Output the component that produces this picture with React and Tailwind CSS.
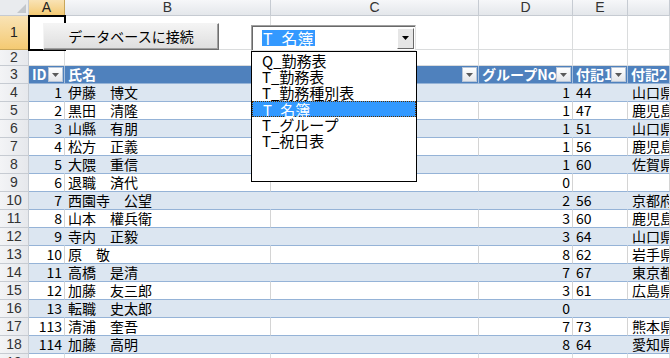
import React from 'react';

const jp = "font-['Noto_Sans_CJK_JP','Noto_Sans',sans-serif]";
const ui = "font-['Liberation_Sans','Noto_Sans_CJK_JP',sans-serif]";

const colW = ['w-[36px]', 'w-[206px]', 'w-[208px]', 'w-[94px]', 'w-[55px]', 'flex-1'];

const people = [
  ['1', '伊藤　博文', '1', '44', '山口県'],
  ['2', '黒田　清隆', '1', '47', '鹿児島県'],
  ['3', '山縣　有朋', '1', '51', '山口県'],
  ['4', '松方　正義', '1', '56', '鹿児島県'],
  ['5', '大隈　重信', '1', '60', '佐賀県'],
  ['6', '退職　済代', '0', '', ''],
  ['7', '西園寺　公望', '2', '56', '京都府'],
  ['8', '山本　權兵衛', '3', '60', '鹿児島県'],
  ['9', '寺内　正毅', '3', '64', '山口県'],
  ['10', '原　敬', '8', '62', '岩手県'],
  ['11', '高橋　是清', '7', '67', '東京都'],
  ['12', '加藤　友三郎', '3', '61', '広島県'],
  ['13', '転職　史太郎', '0', '', ''],
  ['113', '清浦　奎吾', '7', '73', '熊本県'],
  ['114', '加藤　高明', '8', '64', '愛知県'],
];

const tables = ['Q_勤務表', 'T_勤務表', 'T_勤務種別表', 'T_名簿', 'T_グループ', 'T_祝日表'];

function RowHead({ n, active, h }) {
  return (
    <div
      className={`w-[29px] shrink-0 ${h} border-r border-b text-center text-[14px] ${ui} ${
        active
          ? 'bg-gradient-to-b from-[#F9E3B5] to-[#F4CA72] border-[#C8A65A] text-[#222]'
          : 'bg-gradient-to-r from-[#F3F4F6] to-[#E6E8EC] border-[#C6CBD2] text-[#333]'
      } flex items-center justify-center`}
    >
      {n}
    </div>
  );
}

function FilterBtn() {
  return (
    <div className="w-[15px] h-[15px] shrink-0 mr-[1px] border border-[#B8C6D8] bg-gradient-to-b from-white to-[#E4E6EA] flex items-center justify-center">
      <svg width="7" height="4" viewBox="0 0 7 4">
        <path d="M0 0h7L3.5 4z" fill="#5A5A5A" />
      </svg>
    </div>
  );
}

function PlainRow({ n, active, h = 'h-[16px]' }) {
  return (
    <div className="flex">
      <RowHead n={n} active={active} h={h} />
      {colW.map((w, i) => (
        <div key={i} className={`${w} shrink-0 ${h} border-r border-b border-[#DADCDD]`} />
      ))}
    </div>
  );
}

function DataRow({ n, p, blue }) {
  const bg = blue ? 'bg-[#DCE6F1] border-r-[#DCE6F1]' : 'bg-white border-r-[#D4D4D4]';
  const cell = `shrink-0 h-[18px] border-r border-b border-b-[#95B3D7] ${bg} leading-[17px] text-[14px] text-black whitespace-nowrap overflow-hidden`;
  return (
    <div className={`flex ${jp}`}>
      <RowHead n={n} h="h-[18px]" />
      <div className={`${colW[0]} ${cell} text-right pr-[2px]`}>{p[0]}</div>
      <div className={`${colW[1]} ${cell} pl-[3px]`}>{p[1]}</div>
      <div className={`${colW[2]} ${cell}`} />
      <div className={`${colW[3]} ${cell} text-right pr-[2px]`}>{p[2]}</div>
      <div className={`${colW[4]} ${cell} pl-[3px]`}>{p[3]}</div>
      <div className={`${colW[5]} ${cell} pl-[4px]`}>{p[4]}</div>
    </div>
  );
}

function HeadCell({ w, label, last }) {
  return (
    <div className={`${w} shrink-0 h-[18px] border-r border-b border-r-[#FFFFFF80] border-b-[#95B3D7] bg-[#4F81BD] flex items-center overflow-hidden`}>
      <span className="flex-1 pl-[3px] text-white font-bold text-[14px] leading-[17px] whitespace-nowrap overflow-hidden">
        {label}
      </span>
      {!last && <FilterBtn />}
    </div>
  );
}

export default function App() {
  return (
    <div className={`relative w-[670px] h-[358px] overflow-hidden bg-white ${jp}`}>
      {/* column letters */}
      <div className={`flex h-[16px] ${ui}`}>
        <div className="w-[29px] shrink-0 h-[16px] border-r border-b border-[#C6CBD2] bg-[#E9EBEE] flex items-end justify-end p-[2px]">
          <svg width="9" height="9" viewBox="0 0 9 9">
            <path d="M9 0v9H0z" fill="#C3C7CC" />
          </svg>
        </div>
        {['A', 'B', 'C', 'D', 'E', ''].map((c, i) => (
          <div
            key={i}
            className={`${colW[i]} shrink-0 h-[16px] border-r border-b text-center text-[14px] leading-[15px] ${
              i === 0
                ? 'bg-gradient-to-b from-[#F9E3B5] to-[#F4CA72] border-[#C8A65A] text-[#222]'
                : 'bg-gradient-to-b from-[#F6F7F9] to-[#E4E7EB] border-[#C6CBD2] text-[#333]'
            }`}
          >
            {c}
          </div>
        ))}
      </div>

      <PlainRow n="1" active h="h-[34px]" />
      <PlainRow n="2" />

      {/* table header */}
      <div className={`flex ${jp}`}>
        <RowHead n="3" h="h-[18px]" />
        <HeadCell w={colW[0]} label="ID" />
        <HeadCell w={colW[1]} label="氏名" />
        <HeadCell w={colW[2]} label="" />
        <HeadCell w={colW[3]} label="グループNo" />
        <HeadCell w={colW[4]} label="付記1" />
        <HeadCell w={colW[5]} label="付記2" last />
      </div>

      {people.map((p, i) => (
        <DataRow key={i} n={String(i + 4)} p={p} blue={i % 2 === 0} />
      ))}
      <PlainRow n="19" h="h-[18px]" />

      {/* selected cell A1 */}
      <div className="absolute left-[28px] top-[15px] w-[38px] h-[36px] border-2 border-black" />

      {/* connect button */}
      <div className="absolute left-[43px] top-[23px] w-[176px] h-[27px] border border-t-[#F4F4F4] border-l-[#F4F4F4] border-r-[#6E6E6E] border-b-[#6E6E6E] bg-gradient-to-b from-[#F4F4F4] to-[#DEDEDE] shadow-[inset_-1px_-1px_0_#A0A0A0] flex items-center justify-center text-[14px] text-black">
        データベースに接続
      </div>

      {/* combo box */}
      <div className="absolute left-[251px] top-[25px] w-[165px] h-[26px] bg-white border border-t-[#A0A0A0] border-l-[#A0A0A0] border-r-[#E3E3E3] border-b-[#E3E3E3] shadow-[inset_1px_1px_0_#696969] flex items-center">
        <span className="ml-[10px] h-[16px] leading-[16px] px-[1px] bg-[#3399FF] text-white text-[16px]">T_名簿</span>
        <div className="ml-auto mr-[1px] w-[17px] h-[21px] bg-[#E6E6E6] border border-t-white border-l-white border-r-[#696969] border-b-[#696969] flex items-center justify-center">
          <svg width="7" height="4" viewBox="0 0 7 4">
            <path d="M0 0h7L3.5 4z" fill="#000" />
          </svg>
        </div>
      </div>

      {/* drop-down list */}
      <div className="absolute left-[251px] top-[51px] w-[166px] h-[131px] bg-white border border-black pt-[1px]">
        {tables.map((t) => (
          <div
            key={t}
            className={`h-[16px] leading-[16px] pl-[10px] text-[15px] whitespace-nowrap ${
              t === 'T_名簿'
                ? 'bg-[#3399FF] text-white border border-dotted border-[#5A3000] pl-[9px] leading-[14px]'
                : 'text-black'
            }`}
          >
            {t}
          </div>
        ))}
      </div>
    </div>
  );
}
